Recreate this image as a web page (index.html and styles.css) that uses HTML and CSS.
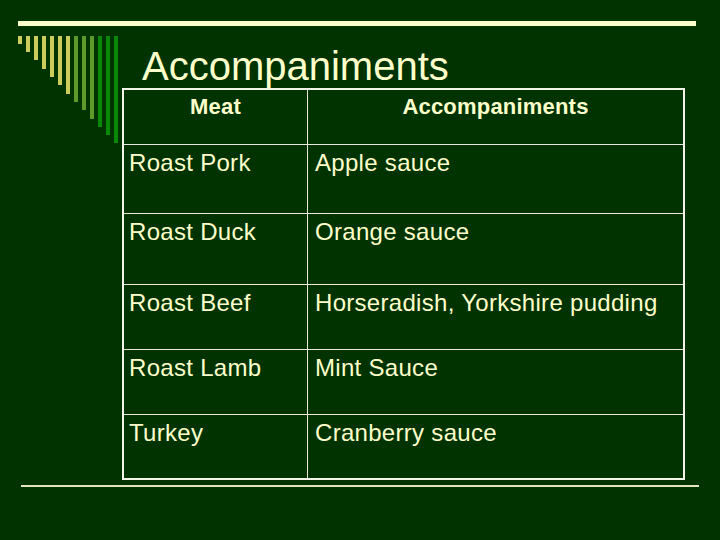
FILE: index.html
```html
<!DOCTYPE html>
<html>
<head>
<meta charset="utf-8">
<link rel="stylesheet" href="styles.css">
</head>
<body>
<div class="slide">
  <div class="topbar"></div>
  <div class="main">
    <div class="stripes">
      <span class="s y"></span><span class="s y"></span><span class="s y"></span><span class="s y"></span><span class="s y"></span><span class="s y"></span><span class="s y"></span>
      <span class="s o"></span><span class="s o"></span><span class="s o"></span>
      <span class="s g"></span><span class="s g"></span><span class="s g"></span>
    </div>
    <div class="content">
      <h1 class="title">Accompaniments</h1>
      <div class="table">
        <div class="cell head c1">Meat</div>
        <div class="cell head c2">Accompaniments</div>
        <div class="cell c1">Roast Pork</div>
        <div class="cell c2">Apple sauce</div>
        <div class="cell c1">Roast Duck</div>
        <div class="cell c2">Orange sauce</div>
        <div class="cell c1">Roast Beef</div>
        <div class="cell c2">Horseradish, Yorkshire pudding</div>
        <div class="cell c1">Roast Lamb</div>
        <div class="cell c2">Mint Sauce</div>
        <div class="cell c1 last">Turkey</div>
        <div class="cell c2 last">Cranberry sauce</div>
      </div>
    </div>
  </div>
  <div class="bottomline"></div>
</div>
</body>
</html>
```
FILE: styles.css
```css
html, body {
  margin: 0;
  padding: 0;
  background: #003300;
}
.slide {
  width: 720px;
  height: 540px;
  overflow: hidden;
  background: #003300;
  color: #ffffcc;
  font-family: "Liberation Sans", Arial, sans-serif;
  display: flow-root;
}
.topbar {
  margin: 21px 0 0 18px;
  width: 678px;
  height: 5px;
  background: #ffffcc;
}
.main {
  display: flex;
  align-items: flex-start;
  margin-top: 10px;
  margin-left: 18px;
}
.stripes {
  display: flex;
  align-items: flex-start;
  gap: 4px;
  width: 100px;
}
.s {
  display: block;
  width: 4px;
}
.s.y { background: #cccc5c; }
.s.o { background: #5f992b; }
.s.g { background: #0a880a; }
.s:nth-child(1) { height: 8px; }
.s:nth-child(2) { height: 16px; }
.s:nth-child(3) { height: 24px; }
.s:nth-child(4) { height: 33px; }
.s:nth-child(5) { height: 41px; }
.s:nth-child(6) { height: 49px; }
.s:nth-child(7) { height: 58px; }
.s:nth-child(8) { height: 66px; }
.s:nth-child(9) { height: 74px; }
.s:nth-child(10) { height: 83px; }
.s:nth-child(11) { height: 91px; }
.s:nth-child(12) { height: 99px; }
.s:nth-child(13) { height: 107px; }
.content {
  margin-left: 4px;
}
.title {
  margin: 8px 0 0 0;
  padding-left: 20px;
  font-size: 40px;
  line-height: 44px;
  font-weight: normal;
  color: #ffffcc;
}
.table {
  box-sizing: border-box;
  width: 563px;
  border: 2px solid #f4f4ea;
  display: grid;
  grid-template-columns: 184px 1fr;
  grid-template-rows: 55px 69px 71px 65px 65px 63px;
}
.cell {
  box-sizing: border-box;
  border-bottom: 1px solid #e8e8dc;
  font-size: 24px;
  line-height: 28px;
  padding-top: 4px;
  letter-spacing: 0.3px;
  white-space: nowrap;
}
.c1 {
  border-right: 1px solid #e8e8dc;
  padding-left: 5px;
}
.c2 {
  padding-left: 7px;
}
.cell.last {
  border-bottom: none;
}
.cell.head {
  font-weight: bold;
  font-size: 22px;
  line-height: 24px;
  padding: 5px 0 0 0;
  text-align: center;
  letter-spacing: 0.2px;
}
.bottomline {
  margin: 5px 0 0 21px;
  width: 678px;
  height: 2px;
  background: #e4e4bc;
}
```
